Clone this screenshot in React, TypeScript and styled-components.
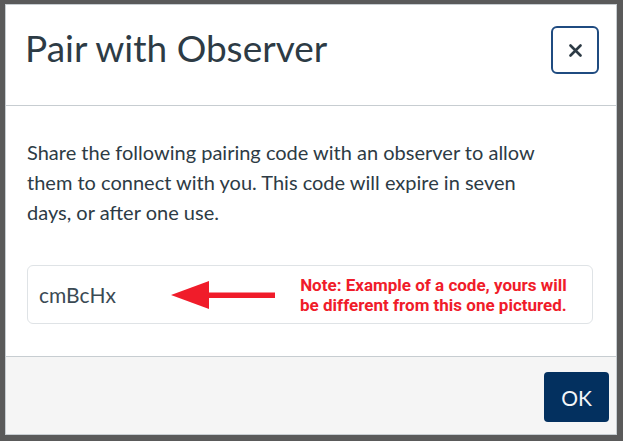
import React from "react";
import styled, { createGlobalStyle } from "styled-components";

const Global = createGlobalStyle`
  html, body { margin: 0; padding: 0; }
  body { background: #5a5a5a; font-family: Lato, "Noto Sans", sans-serif; }
  * { box-sizing: border-box; }
`;

const Frame = styled.div`
  width: 623px;
  height: 441px;
  padding: 4px 6px 6px 5px;
  display: flex;
`;

const Modal = styled.div`
  flex: 1;
  display: flex;
  flex-direction: column;
  background: #ffffff;
  border: 1px solid #c7cdd1;
`;

const Header = styled.header`
  height: 101px;
  flex: none;
  display: flex;
  align-items: flex-start;
  justify-content: space-between;
  padding: 21px 17px 0 19px;
  border-bottom: 1px solid #c7cdd1;
`;

const Title = styled.h2`
  margin: 0;
  font-family: Lato, sans-serif;
  font-weight: 400;
  font-size: 37px;
  line-height: 1.2;
  color: #2d3b45;
`;

const CloseButton = styled.button`
  width: 48px;
  height: 48px;
  margin-top: 0;
  border: 2px solid #1f4b80;
  border-radius: 6px;
  background: #fff;
  display: flex;
  align-items: center;
  justify-content: center;
  padding: 0;
  color: #2d3b45;
`;

const Body = styled.section`
  flex: 1;
  padding: 31px 23px 0 21px;
`;

const Text = styled.p`
  margin: 0;
  max-width: 514px;
  font-family: Lato, sans-serif;
  font-size: 20px;
  line-height: 30px;
  color: #2d3b45;
`;

const CodeBox = styled.div`
  margin-top: 38px;
  height: 59px;
  border: 1px solid #dfe3e6;
  border-radius: 6px;
  display: flex;
  align-items: center;
  padding-left: 11px;
`;

const Code = styled.span`
  font-family: Lato, sans-serif;
  font-size: 21px;
  color: #3b4a54;
`;

const Arrow = styled.svg`
  margin-left: 55px;
  flex: none;
`;

const Note = styled.div`
  flex: 1;
  text-align: center;
  font-family: Roboto, "Liberation Sans", sans-serif;
  font-weight: 700;
  font-size: 17px;
  line-height: 20px;
  color: #f01c2a;
`;

const Footer = styled.footer`
  height: 78px;
  flex: none;
  background: #f5f5f5;
  border-top: 1px solid #c7cdd1;
  display: flex;
  justify-content: flex-end;
  align-items: flex-start;
  padding: 15px 7px 0 0;
`;

const OkButton = styled.button`
  width: 65px;
  height: 50px;
  border: none;
  border-radius: 4px;
  background: #03305f;
  color: #f4f6f8;
  font-family: Lato, sans-serif;
  font-size: 21px;
  padding: 0;
`;

export default function App() {
  return (
    <>
      <Global />
      <Frame>
        <Modal>
          <Header>
            <Title>Pair with Observer</Title>
            <CloseButton aria-label="Close">
              <svg width="13" height="13" viewBox="0 0 13 13">
                <path d="M1.5 1.5 L11.5 11.5 M11.5 1.5 L1.5 11.5" stroke="#2d3b45" strokeWidth="2.6" strokeLinecap="round" />
              </svg>
            </CloseButton>
          </Header>
          <Body>
            <Text>
              Share the following pairing code with an observer to allow them to connect with you. This code will expire in seven days, or after one use.
            </Text>
            <CodeBox>
              <Code>cmBcHx</Code>
              <Arrow width="104" height="30" viewBox="0 0 104 30">
                <polygon points="0,15 38,1 38,29" fill="#f01c2a" />
                <rect x="36" y="12.5" width="68" height="5.5" fill="#f01c2a" />
              </Arrow>
              <Note>
                Note: Example of a code, yours will
                <br />
                be different from this one pictured.
              </Note>
            </CodeBox>
          </Body>
          <Footer>
            <OkButton>OK</OkButton>
          </Footer>
        </Modal>
      </Frame>
    </>
  );
}
